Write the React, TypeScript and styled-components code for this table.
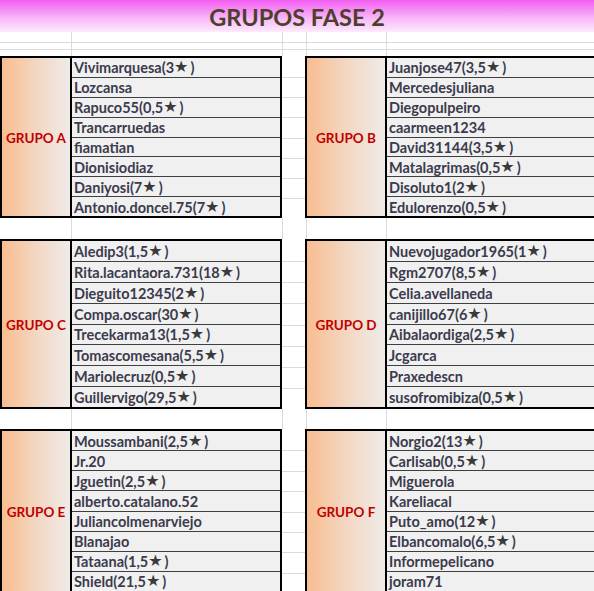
import React from "react";
import styled, { createGlobalStyle } from "styled-components";

type Player = { name: string; stars?: string };
type Group = { label: string; players: Player[] };

const p = (name: string, stars?: string): Player => ({ name, stars });

const rows: [Group, Group][] = [
  [
    {
      label: "GRUPO A",
      players: [
        p("Vivimarquesa", "3"),
        p("Lozcansa"),
        p("Rapuco55", "0,5"),
        p("Trancarruedas"),
        p("fiamatian"),
        p("Dionisiodiaz"),
        p("Daniyosi", "7"),
        p("Antonio.doncel.75", "7"),
      ],
    },
    {
      label: "GRUPO B",
      players: [
        p("Juanjose47", "3,5"),
        p("Mercedesjuliana"),
        p("Diegopulpeiro"),
        p("caarmeen1234"),
        p("David31144", "3,5"),
        p("Matalagrimas", "0,5"),
        p("Disoluto1", "2"),
        p("Edulorenzo", "0,5"),
      ],
    },
  ],
  [
    {
      label: "GRUPO C",
      players: [
        p("Aledip3", "1,5"),
        p("Rita.lacantaora.731", "18"),
        p("Dieguito12345", "2"),
        p("Compa.oscar", "30"),
        p("Trecekarma13", "1,5"),
        p("Tomascomesana", "5,5"),
        p("Mariolecruz", "0,5"),
        p("Guillervigo", "29,5"),
      ],
    },
    {
      label: "GRUPO D",
      players: [
        p("Nuevojugador1965", "1"),
        p("Rgm2707", "8,5"),
        p("Celia.avellaneda"),
        p("canijillo67", "6"),
        p("Aibalaordiga", "2,5"),
        p("Jcgarca"),
        p("Praxedescn"),
        p("susofromibiza", "0,5"),
      ],
    },
  ],
  [
    {
      label: "GRUPO E",
      players: [
        p("Moussambani", "2,5"),
        p("Jr.20"),
        p("Jguetin", "2,5"),
        p("alberto.catalano.52"),
        p("Juliancolmenarviejo"),
        p("Blanajao"),
        p("Tataana", "1,5"),
        p("Shield", "21,5"),
      ],
    },
    {
      label: "GRUPO F",
      players: [
        p("Norgio2", "13"),
        p("Carlisab", "0,5"),
        p("Miguerola"),
        p("Kareliacal"),
        p("Puto_amo", "12"),
        p("Elbancomalo", "6,5"),
        p("Informepelicano"),
        p("joram71"),
      ],
    },
  ],
];

// heights of the three block rows and the blank rows after them
const blockHeights = [162, 170, 164];
const blankHeights = [21, 20];

const GlobalStyle = createGlobalStyle`
  html, body {
    margin: 0;
    padding: 0;
    background: #fff;
  }
  * {
    box-sizing: border-box;
  }
`;

const Sheet = styled.div`
  width: 594px;
  height: 591px;
  overflow: hidden;
  background: #fff;
  font-family: Lato, "Open Sans", sans-serif;
`;

const Title = styled.div`
  height: 32px;
  background: linear-gradient(to bottom, #f25cf2 0%, #f7b5f7 55%, #fdeafd 100%);
  display: flex;
  align-items: center;
  justify-content: center;
  font-size: 23.5px;
  font-weight: 700;
  color: #4e3e2c;
  padding-top: 1px;
`;

const GridRow = styled.div<{ $h: number; $line?: boolean }>`
  display: grid;
  grid-template-columns: 72px 211px 24px 80px 1fr;
  height: ${(p) => p.$h}px;
  border-bottom: ${(p) => (p.$line ? "1px solid #dadada" : "none")};
`;

const GridCell = styled.div`
  border-right: 1px solid #dadada;
`;

const BlockRow = styled.div<{ $h: number }>`
  display: grid;
  grid-template-columns: 282px 23px 1fr;
  height: ${(p) => p.$h}px;
`;

const Block = styled.div<{ $label: number; $names: number }>`
  display: grid;
  grid-template-columns: ${(p) => p.$label}px ${(p) => p.$names}px;
  border: 2px solid #000;
  height: 100%;
`;

const Label = styled.div`
  display: flex;
  align-items: center;
  justify-content: center;
  background: linear-gradient(to right, #f8bd90 0%, #f3d7c2 50%, #efebe8 100%);
  border-right: 2px solid #000;
  color: #c00000;
  font-weight: 700;
  font-size: 13.5px;
  padding-top: 2px;
`;

const Names = styled.div`
  display: flex;
  flex-direction: column;
  background: #f0f0f0;
`;

const NameCell = styled.div`
  flex: 1;
  min-height: 0;
  display: flex;
  align-items: center;
  padding: 2px 0 0 2px;
  font-size: 14.5px;
  line-height: 1.1;
  font-weight: 700;
  color: #3b3b4d;
  white-space: nowrap;
  border-bottom: 1px solid #3f3f3f;
  &:last-child {
    border-bottom: none;
  }
`;

const Star = styled.span`
  color: #3a3a3a;
  font-family: "DejaVu Sans", sans-serif;
  font-size: 16px;
  line-height: 1;
  margin: -2px 2px 0 0;
`;

const GapColumn = styled.div`
  display: flex;
  flex-direction: column;
  padding-top: 2px;
`;

const GapCell = styled.div`
  flex: 1;
  border-bottom: 1px solid #dadada;
  &:last-child {
    border-bottom: none;
  }
`;

function Spacer({ h, line }: { h: number; line?: boolean }) {
  return (
    <GridRow $h={h} $line={line}>
      <GridCell />
      <GridCell />
      <GridCell />
      <GridCell />
      <div />
    </GridRow>
  );
}

function GroupBlock({ group, label, names }: { group: Group; label: number; names: number }) {
  return (
    <Block $label={label} $names={names}>
      <Label>{group.label}</Label>
      <Names>
        {group.players.map((pl) => (
          <NameCell key={pl.name}>
            {pl.stars ? (
              <>
                {pl.name}({pl.stars}
                <Star>★</Star>)
              </>
            ) : (
              pl.name
            )}
          </NameCell>
        ))}
      </Names>
    </Block>
  );
}

export default function App() {
  return (
    <>
      <GlobalStyle />
      <Sheet>
        <Title>GRUPOS FASE 2</Title>
        <Spacer h={11} line />
        <Spacer h={7} line />
        <Spacer h={6} />
        {rows.map(([left, right], i) => (
          <React.Fragment key={left.label}>
            <BlockRow $h={blockHeights[i]}>
              <GroupBlock group={left} label={70} names={208} />
              <GapColumn>
                {Array.from({ length: 8 }).map((_, k) => (
                  <GapCell key={k} />
                ))}
              </GapColumn>
              <GroupBlock group={right} label={80} names={208} />
            </BlockRow>
            {i < blankHeights.length && <Spacer h={blankHeights[i]} />}
          </React.Fragment>
        ))}
      </Sheet>
    </>
  );
}
